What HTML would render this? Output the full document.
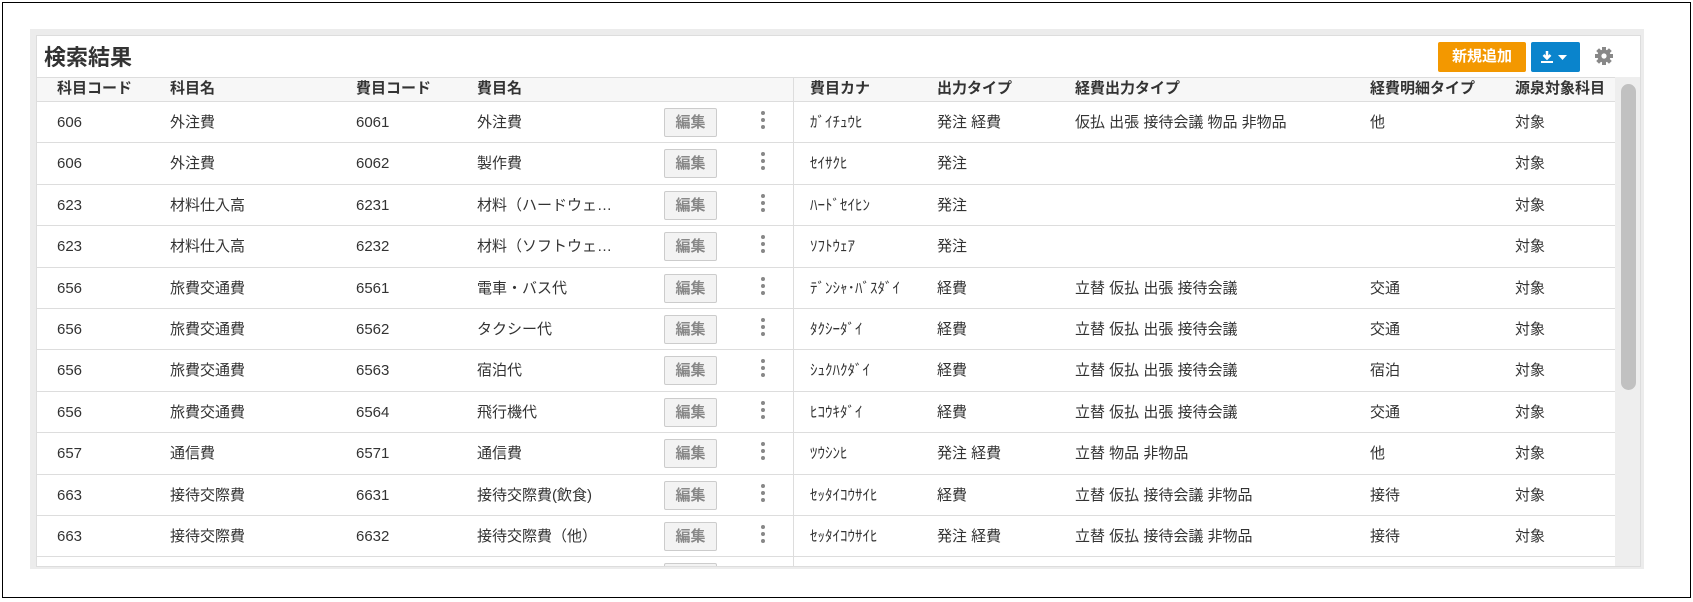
<!DOCTYPE html>
<html><head><meta charset="utf-8"><style>
*{margin:0;padding:0;box-sizing:border-box}
body{width:1693px;height:602px;background:#fff;position:relative;overflow:hidden;font-family:"Liberation Sans","Noto Sans CJK JP",sans-serif;color:#333;font-size:15px}
.frame{position:absolute;left:2px;top:2px;width:1689px;height:596px;border:1.5px solid #000}
.gray{position:absolute;left:30px;top:29px;width:1614px;height:540px;background:#ececec}
.panel{position:absolute;left:36px;top:35px;width:1605px;height:532px;background:#fff;border:1px solid #ddd;overflow:hidden}
.title{position:absolute;left:7px;top:4px;font-size:22px;font-weight:bold;color:#333}
.btn1{position:absolute;left:1401px;top:6px;width:88px;height:30px;background:#f39800;color:#fff;font-weight:bold;font-size:15px;text-align:center;line-height:30px;border-radius:2px}
.btn2{position:absolute;left:1494px;top:6px;width:49px;height:30px;background:#0a84cc;border-radius:2px}
.gear{position:absolute;left:1557px;top:10px}
.hdr{position:absolute;left:0;top:41px;width:1578px;height:25px;background:#f7f7f7;border-top:1px solid #ddd;border-bottom:1px solid #ddd}
.c{position:absolute;white-space:nowrap;line-height:22px}
.hdr .c{top:0px;font-weight:bold;font-size:15px}
.row{position:absolute;left:0;width:1578px;height:41.4px;border-bottom:1.5px solid #ddd}
.row .c{top:10px}
.edit{position:absolute;left:627px;top:6px;width:53px;height:29px;background:#f3f3f3;border:1px solid #ccc;border-radius:2px;color:#888;font-weight:bold;text-align:center;line-height:27px;font-size:15px}
.dots{position:absolute;left:724px;top:9px;width:4px}
.dots i{display:block;width:4px;height:4px;border-radius:50%;background:#888;margin-bottom:3px}
.vline{position:absolute;left:756px;top:41px;width:1px;height:500px;background:#ddd}
.sb{position:absolute;left:1578px;top:41px;width:27px;height:500px;background:#eee}
.thumb{position:absolute;left:1584px;top:48px;width:15px;height:306px;background:#c1c1c1;border-radius:8px}
.a{left:20px}.b{left:133px}.d{left:319px}.e{left:440px}
</style></head><body>
<div class="frame"></div>
<div class="gray"></div>
<div class="panel">
<div class="title">検索結果</div>
<div class="btn1">新規追加</div>
<div class="btn2"><svg width="49" height="30"><path d="M16 9v7M12.5 13l3.5 3.5 3.5-3.5" stroke="#fff" stroke-width="2.5" fill="none"/><rect x="10" y="19" width="12" height="2" fill="#fff"/><path d="M27 13h9l-4.5 5z" fill="#fff"/></svg></div>
<svg class="gear" width="20" height="20" viewBox="0 0 20 20"><g fill="#888"><circle cx="10" cy="10" r="6.5"/><rect x="8" y="1" width="4" height="18"/><rect x="1" y="8" width="18" height="4"/><rect x="8" y="1" width="4" height="18" transform="rotate(45 10 10)"/><rect x="8" y="1" width="4" height="18" transform="rotate(-45 10 10)"/></g><circle cx="10" cy="10" r="2.6" fill="#fff"/></svg>
<div class="hdr">
<span class="c a">科目コード</span><span class="c b">科目名</span><span class="c d">費目コード</span><span class="c e">費目名</span><span class="c" style="left:773px">費目カナ</span><span class="c" style="left:900px">出力タイプ</span><span class="c" style="left:1038px">経費出力タイプ</span><span class="c" style="left:1333px">経費明細タイプ</span><span class="c" style="left:1478px">源泉対象科目</span>
</div>
<div class="vline"></div>
<div class="row" style="top:66px"><span class="c a">606</span><span class="c b">外注費</span><span class="c d">6061</span><span class="c e">外注費</span><div class="edit">編集</div><div class="dots"><i></i><i></i><i></i></div><span class="c" style="left:773px">ｶﾞｲﾁｭｳﾋ</span><span class="c" style="left:900px">発注 経費</span><span class="c" style="left:1038px">仮払 出張 接待会議 物品 非物品</span><span class="c" style="left:1333px">他</span><span class="c" style="left:1478px">対象</span></div>
<div class="row" style="top:107.4px"><span class="c a">606</span><span class="c b">外注費</span><span class="c d">6062</span><span class="c e">製作費</span><div class="edit">編集</div><div class="dots"><i></i><i></i><i></i></div><span class="c" style="left:773px">ｾｲｻｸﾋ</span><span class="c" style="left:900px">発注</span><span class="c" style="left:1478px">対象</span></div>
<div class="row" style="top:148.8px"><span class="c a">623</span><span class="c b">材料仕入高</span><span class="c d">6231</span><span class="c e">材料（ハードウェ…</span><div class="edit">編集</div><div class="dots"><i></i><i></i><i></i></div><span class="c" style="left:773px">ﾊｰﾄﾞｾｲﾋﾝ</span><span class="c" style="left:900px">発注</span><span class="c" style="left:1478px">対象</span></div>
<div class="row" style="top:190.2px"><span class="c a">623</span><span class="c b">材料仕入高</span><span class="c d">6232</span><span class="c e">材料（ソフトウェ…</span><div class="edit">編集</div><div class="dots"><i></i><i></i><i></i></div><span class="c" style="left:773px">ｿﾌﾄｳｪｱ</span><span class="c" style="left:900px">発注</span><span class="c" style="left:1478px">対象</span></div>
<div class="row" style="top:231.6px"><span class="c a">656</span><span class="c b">旅費交通費</span><span class="c d">6561</span><span class="c e">電車・バス代</span><div class="edit">編集</div><div class="dots"><i></i><i></i><i></i></div><span class="c" style="left:773px">ﾃﾞﾝｼｬ･ﾊﾞｽﾀﾞｲ</span><span class="c" style="left:900px">経費</span><span class="c" style="left:1038px">立替 仮払 出張 接待会議</span><span class="c" style="left:1333px">交通</span><span class="c" style="left:1478px">対象</span></div>
<div class="row" style="top:273px"><span class="c a">656</span><span class="c b">旅費交通費</span><span class="c d">6562</span><span class="c e">タクシー代</span><div class="edit">編集</div><div class="dots"><i></i><i></i><i></i></div><span class="c" style="left:773px">ﾀｸｼｰﾀﾞｲ</span><span class="c" style="left:900px">経費</span><span class="c" style="left:1038px">立替 仮払 出張 接待会議</span><span class="c" style="left:1333px">交通</span><span class="c" style="left:1478px">対象</span></div>
<div class="row" style="top:314.4px"><span class="c a">656</span><span class="c b">旅費交通費</span><span class="c d">6563</span><span class="c e">宿泊代</span><div class="edit">編集</div><div class="dots"><i></i><i></i><i></i></div><span class="c" style="left:773px">ｼｭｸﾊｸﾀﾞｲ</span><span class="c" style="left:900px">経費</span><span class="c" style="left:1038px">立替 仮払 出張 接待会議</span><span class="c" style="left:1333px">宿泊</span><span class="c" style="left:1478px">対象</span></div>
<div class="row" style="top:355.8px"><span class="c a">656</span><span class="c b">旅費交通費</span><span class="c d">6564</span><span class="c e">飛行機代</span><div class="edit">編集</div><div class="dots"><i></i><i></i><i></i></div><span class="c" style="left:773px">ﾋｺｳｷﾀﾞｲ</span><span class="c" style="left:900px">経費</span><span class="c" style="left:1038px">立替 仮払 出張 接待会議</span><span class="c" style="left:1333px">交通</span><span class="c" style="left:1478px">対象</span></div>
<div class="row" style="top:397.2px"><span class="c a">657</span><span class="c b">通信費</span><span class="c d">6571</span><span class="c e">通信費</span><div class="edit">編集</div><div class="dots"><i></i><i></i><i></i></div><span class="c" style="left:773px">ﾂｳｼﾝﾋ</span><span class="c" style="left:900px">発注 経費</span><span class="c" style="left:1038px">立替 物品 非物品</span><span class="c" style="left:1333px">他</span><span class="c" style="left:1478px">対象</span></div>
<div class="row" style="top:438.6px"><span class="c a">663</span><span class="c b">接待交際費</span><span class="c d">6631</span><span class="c e">接待交際費(飲食)</span><div class="edit">編集</div><div class="dots"><i></i><i></i><i></i></div><span class="c" style="left:773px">ｾｯﾀｲｺｳｻｲﾋ</span><span class="c" style="left:900px">経費</span><span class="c" style="left:1038px">立替 仮払 接待会議 非物品</span><span class="c" style="left:1333px">接待</span><span class="c" style="left:1478px">対象</span></div>
<div class="row" style="top:480px"><span class="c a">663</span><span class="c b">接待交際費</span><span class="c d">6632</span><span class="c e">接待交際費（他）</span><div class="edit">編集</div><div class="dots"><i></i><i></i><i></i></div><span class="c" style="left:773px">ｾｯﾀｲｺｳｻｲﾋ</span><span class="c" style="left:900px">発注 経費</span><span class="c" style="left:1038px">立替 仮払 接待会議 非物品</span><span class="c" style="left:1333px">接待</span><span class="c" style="left:1478px">対象</span></div>
<div class="row" style="top:521.4px"><div class="edit"></div></div>
<div class="sb"></div><div class="thumb"></div>
</div>
</body></html>
